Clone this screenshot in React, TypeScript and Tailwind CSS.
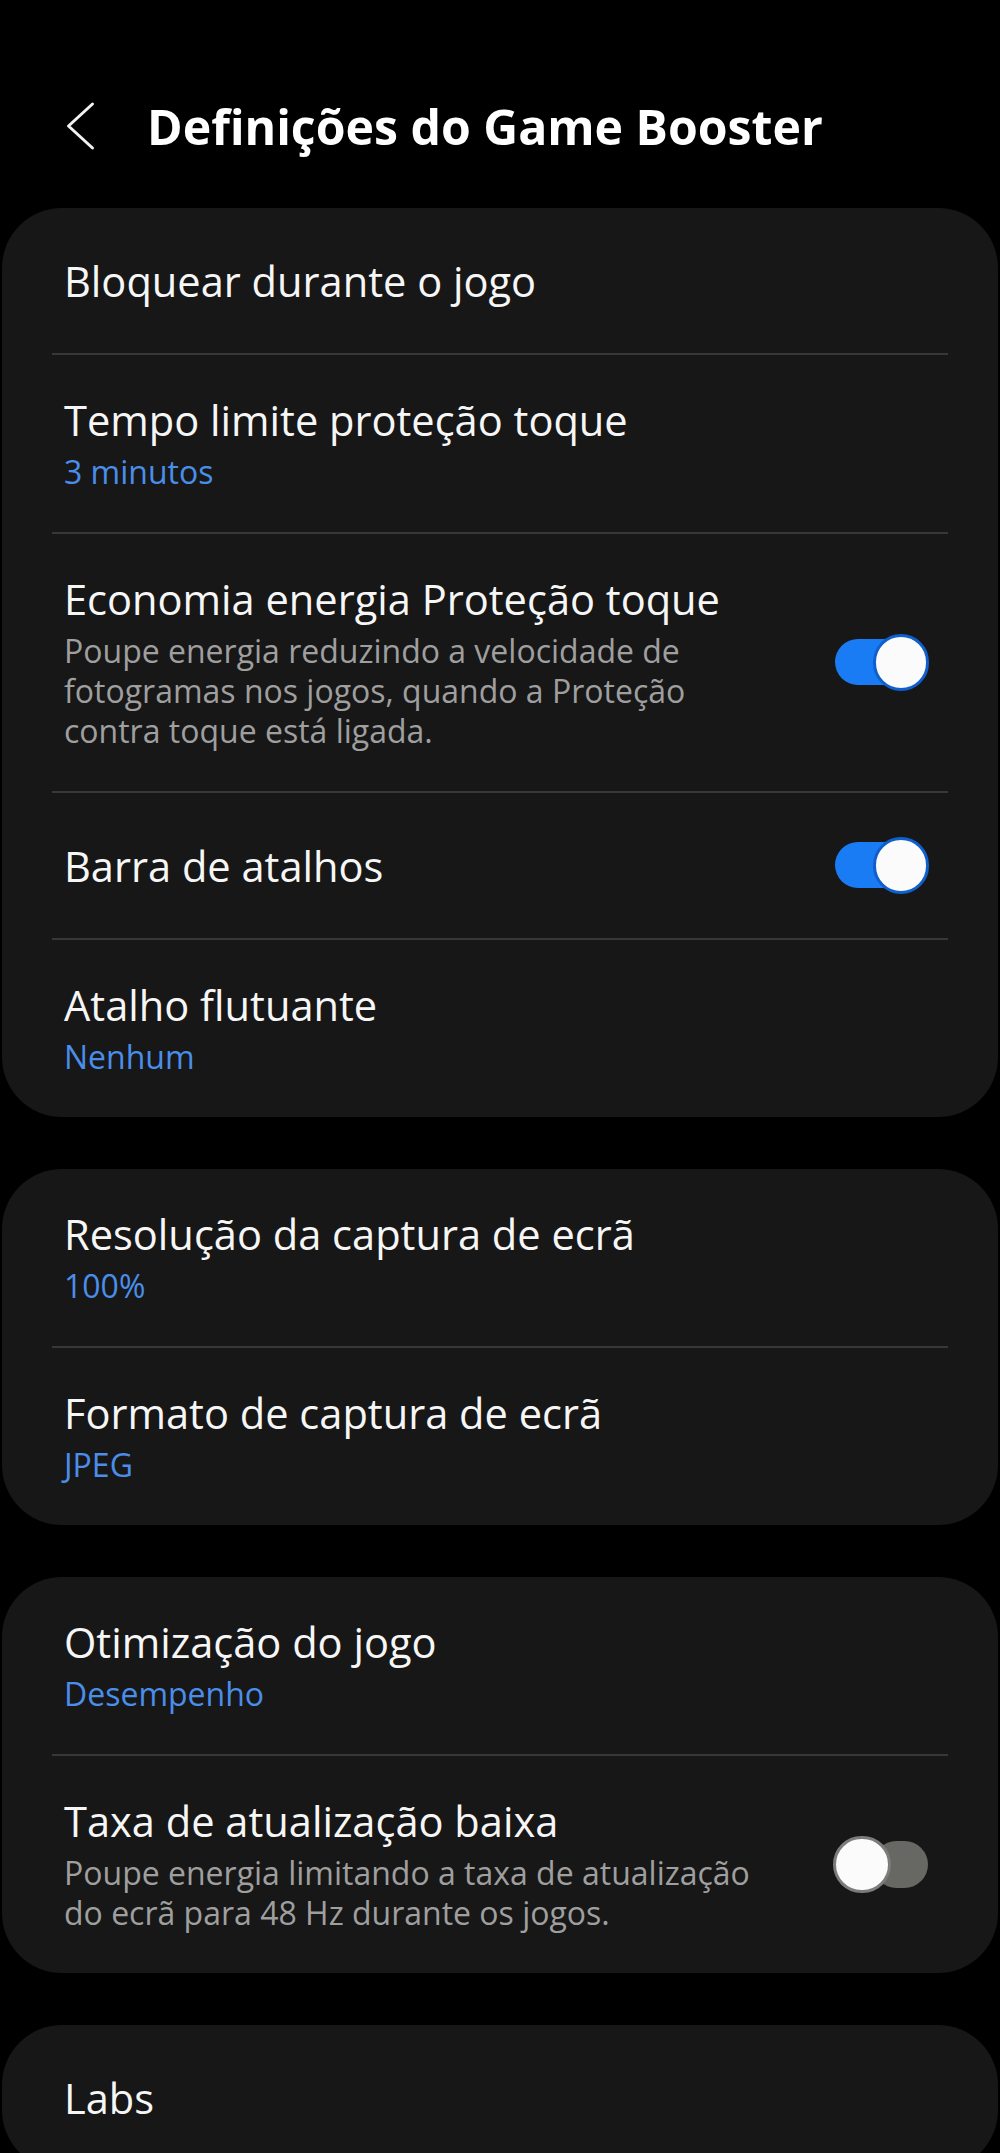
type Row = {
  title: string;
  sub?: string;
  desc?: string;
  toggle?: "on" | "off";
};

const groups: Row[][] = [
  [
    { title: "Bloquear durante o jogo" },
    { title: "Tempo limite proteção toque", sub: "3 minutos" },
    {
      title: "Economia energia Proteção toque",
      desc: "Poupe energia reduzindo a velocidade de fotogramas nos jogos, quando a Proteção contra toque está ligada.",
      toggle: "on",
    },
    { title: "Barra de atalhos", toggle: "on" },
    { title: "Atalho flutuante", sub: "Nenhum" },
  ],
  [
    { title: "Resolução da captura de ecrã", sub: "100%" },
    { title: "Formato de captura de ecrã", sub: "JPEG" },
  ],
  [
    { title: "Otimização do jogo", sub: "Desempenho" },
    {
      title: "Taxa de atualização baixa",
      desc: "Poupe energia limitando a taxa de atualização do ecrã para 48 Hz durante os jogos.",
      toggle: "off",
    },
  ],
  [{ title: "Labs" }],
];

function Toggle({ on }: { on: boolean }) {
  if (on) {
    return (
      <div className="relative w-[96px] h-[57px] shrink-0">
        <div className="absolute left-[2px] right-[10px] top-[5px] bottom-[6px] rounded-full bg-[#1a7cf4]" />
        <div className="absolute right-0 top-0 w-[56px] h-[57px] rounded-full bg-[#fbfbfb] border-[3px] border-[#0f5fcc]" />
      </div>
    );
  }
  return (
    <div className="relative w-[96px] h-[57px] shrink-0">
      <div className="absolute left-[40px] right-[1px] top-[5px] bottom-[5px] rounded-full bg-[#676763]" />
      <div className="absolute left-0 top-0 w-[58px] h-[57px] rounded-full bg-[#fbfbfb] border-[3px] border-[#7c7c7a]" />
    </div>
  );
}

function SettingRow({ row }: { row: Row }) {
  return (
    <div className="flex items-center min-h-[145px] py-[40px] pl-[12px] pr-[19px]">
      <div className="w-[703px]">
        <div className="text-[41.6px] leading-[50px] text-[#f6f6f6]">{row.title}</div>
        {row.sub && (
          <div className="mt-[7px] text-[32px] leading-[40px] text-[#4a8eea]">{row.sub}</div>
        )}
        {row.desc && (
          <div className="mt-[7px] text-[32px] leading-[40px] text-[#9f9f9f]">{row.desc}</div>
        )}
      </div>
      {row.toggle && (
        <div className="ml-auto">
          <Toggle on={row.toggle === "on"} />
        </div>
      )}
    </div>
  );
}

export default function App() {
  return (
    <div
      className="h-[2153px] overflow-hidden bg-black"
      style={{ fontFamily: '"Open Sans", "Noto Sans", sans-serif' }}
    >
      {/* top bar */}
      <div className="h-[208px] flex items-center pt-[44px] pl-[64px]">
        <svg width="32" height="50" viewBox="0 0 32 50" fill="none">
          <path
            d="M28.5 3 L4.5 25 L28.5 47"
            stroke="#f2f2f2"
            strokeWidth="3"
            strokeLinecap="round"
            strokeLinejoin="round"
          />
        </svg>
        <h1 className="ml-[51px] text-[48.2px] leading-[60px] font-bold text-white">
          Definições do Game Booster
        </h1>
      </div>

      <div className="flex flex-col gap-[52px]">
        {groups.map((rows, gi) => (
          <div key={gi} className="mx-[2px] rounded-[60px] bg-[#171717] px-[50px]">
            {rows.map((row, ri) => (
              <div key={ri}>
                {ri > 0 && <div className="h-[2px] bg-[#383838]" />}
                <SettingRow row={row} />
              </div>
            ))}
          </div>
        ))}
      </div>
    </div>
  );
}
